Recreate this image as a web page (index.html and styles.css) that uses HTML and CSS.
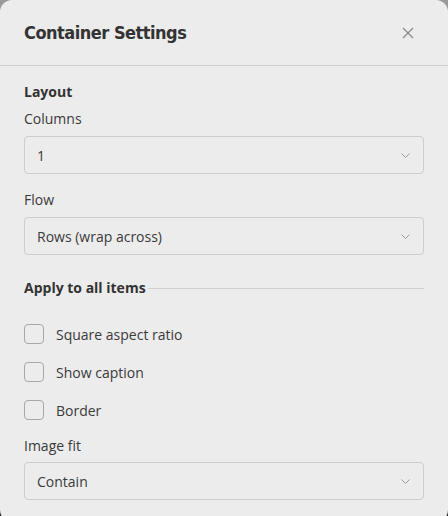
FILE: index.html
```html
<!DOCTYPE html>
<html>
<head>
<meta charset="utf-8">
<link rel="stylesheet" href="styles.css">
</head>
<body>
<div class="dialog">
  <div class="header">
    <h2 class="title">Container Settings</h2>
    <button class="close" aria-label="Close">
      <svg width="12" height="12" viewBox="0 0 12 12"><path d="M1 1L11 11M11 1L1 11" stroke="#8a8a8a" stroke-width="1.3" fill="none"/></svg>
    </button>
  </div>
  <div class="body">
    <div class="section-title">Layout</div>
    <div class="field">
      <div class="label">Columns</div>
      <div class="select"><span>1</span><svg class="chev" width="9" height="5" viewBox="0 0 9 5"><path d="M0.5 0.5L4.5 4.5L8.5 0.5" stroke="#9a9a9a" stroke-width="1" fill="none"/></svg></div>
    </div>
    <div class="field">
      <div class="label">Flow</div>
      <div class="select"><span>Rows (wrap across)</span><svg class="chev" width="9" height="5" viewBox="0 0 9 5"><path d="M0.5 0.5L4.5 4.5L8.5 0.5" stroke="#9a9a9a" stroke-width="1" fill="none"/></svg></div>
    </div>
    <div class="divider-title"><span>Apply to all items</span><div class="rule"></div></div>
    <div class="checks">
      <label class="check"><span class="box"></span><span>Square aspect ratio</span></label>
      <label class="check"><span class="box"></span><span>Show caption</span></label>
      <label class="check"><span class="box"></span><span>Border</span></label>
    </div>
    <div class="field">
      <div class="label">Image fit</div>
      <div class="select"><span>Contain</span><svg class="chev" width="9" height="5" viewBox="0 0 9 5"><path d="M0.5 0.5L4.5 4.5L8.5 0.5" stroke="#9a9a9a" stroke-width="1" fill="none"/></svg></div>
    </div>
  </div>
</div>
</body>
</html>
```
FILE: styles.css
```css
* { box-sizing: border-box; }
html, body { margin: 0; padding: 0; }
body {
  background: linear-gradient(#9a9a9a, #2a2a2a);
  font-family: "Open Sans", "Noto Sans", sans-serif;
  font-size: 14px;
  color: #3a3a3a;
  width: 448px;
  height: 516px;
  overflow: hidden;
}
.dialog {
  background: #ececec;
  border-radius: 12px;
  width: 448px;
  height: 522px;
}
.header {
  height: 66px;
  border-bottom: 1px solid #cfcfcf;
  display: flex;
  align-items: center;
  justify-content: space-between;
  padding: 0 34px 0 24px;
}
.title {
  margin: 0;
  font-family: "DejaVu Sans Condensed", "DejaVu Sans", sans-serif;
  font-weight: bold;
  font-size: 18px;
  letter-spacing: -0.5px;
  color: #333;
}
.close {
  background: none;
  border: 0;
  padding: 0;
  width: 12px;
  height: 12px;
  display: flex;
}
.body {
  padding: 16px 24px 0;
}
.section-title {
  font-weight: bold;
  line-height: 20px;
  margin-bottom: 7px;
  color: #333;
}
.label {
  line-height: 20px;
  margin-bottom: 7px;
}
.field { margin-bottom: 16px; }
.select {
  height: 38px;
  border: 1px solid #cdcdcd;
  border-radius: 4px;
  display: flex;
  align-items: center;
  justify-content: space-between;
  padding: 0 13px 0 12px;
  background: #ececec;
}
.chev { display: block; }
.divider-title {
  display: flex;
  align-items: center;
  font-weight: bold;
  line-height: 20px;
  color: #333;
  margin-top: 23px;
  margin-bottom: 26px;
}
.rule {
  flex: 1;
  height: 1px;
  background: #cfcfcf;
  margin-left: 2px;
}
.checks {
  display: flex;
  flex-direction: column;
  gap: 18px;
  margin-bottom: 16px;
}
.check {
  display: flex;
  align-items: center;
  gap: 12px;
  height: 20px;
}
.box {
  width: 20px;
  height: 20px;
  border: 1px solid #a8a8a8;
  border-radius: 4px;
  background: #ececec;
}
.field:last-child .label { margin-bottom: 6px; }
```
